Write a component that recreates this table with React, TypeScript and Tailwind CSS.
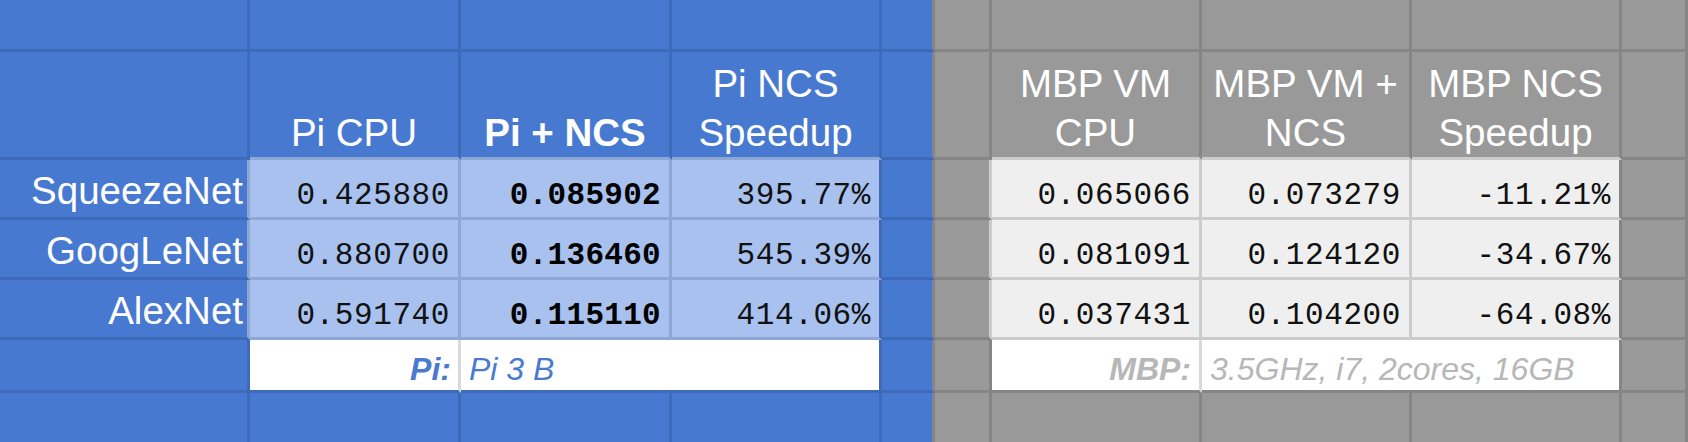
import React from "react";

const BLUE = "bg-[#4879d0]";
const LBLUE = "bg-[#a8c1ee]";
const GRAY = "bg-[#999999]";
const LGRAY = "bg-[#efefef]";
const WHITE = "bg-white";

type CellProps = {
  bg: string;
  r: string;
  b: string;
  className?: string;
  children?: React.ReactNode;
};

function Cell({ bg, r, b, className = "", children }: CellProps) {
  return (
    <div className={`border-r-[3px] border-b-[3px] overflow-visible ${bg} ${r} ${b} ${className}`}>
      {children}
    </div>
  );
}

const R_BL = "border-r-[#3e6bb9]";
const B_BL = "border-b-[#3e6bb9]";
const R_LB = "border-r-[#8fa7d5]";
const B_LB = "border-b-[#8fa7d5]";
const R_GL = "border-r-[#858585]";
const B_GL = "border-b-[#858585]";
const R_LG = "border-r-[#cccccc]";
const B_LG = "border-b-[#cccccc]";
const R_WS = "border-r-[#d9d9d9]";

const HEAD = "flex items-end justify-center text-center text-white text-[38.5px] leading-[49px]";
const LABEL = "flex items-end justify-end pr-[4px] pb-[2px] text-white text-[38.5px] leading-[49px]";
const NUM = "flex items-end justify-end pr-[8px] pb-[1px] font-['Liberation_Mono','Courier_New',monospace] text-[31px] tracking-[0.6px] leading-[40px] text-[#111111]";
const NUMB = "flex items-end justify-end pr-[8px] pb-[1px] font-['Liberation_Mono','Courier_New',monospace] font-bold text-[31px] tracking-[0.3px] leading-[40px] text-black";

const rows = [
  { name: "SqueezeNet", a: "0.425880", b: "0.085902", c: "395.77%", d: "0.065066", e: "0.073279", f: "-11.21%" },
  { name: "GoogLeNet", a: "0.880700", b: "0.136460", c: "545.39%", d: "0.081091", e: "0.124120", f: "-34.67%" },
  { name: "AlexNet", a: "0.591740", b: "0.115110", c: "414.06%", d: "0.037431", e: "0.104200", f: "-64.08%" },
];

function BlankRow() {
  return (
    <>
      <Cell bg={BLUE} r={R_BL} b={B_BL} />
      <Cell bg={BLUE} r={R_BL} b={B_BL} />
      <Cell bg={BLUE} r={R_BL} b={B_BL} />
      <Cell bg={BLUE} r={R_BL} b={B_BL} />
      <Cell bg={BLUE} r={R_GL} b={B_BL} />
      <Cell bg={GRAY} r={R_GL} b={B_GL} />
      <Cell bg={GRAY} r={R_GL} b={B_GL} />
      <Cell bg={GRAY} r={R_GL} b={B_GL} />
      <Cell bg={GRAY} r={R_GL} b={B_GL} />
      <Cell bg={GRAY} r={R_GL} b={B_GL} />
    </>
  );
}

export default function App() {
  return (
    <div className="w-[1688px] h-[442px] overflow-hidden bg-[#999999] font-['Liberation_Sans',Arial,sans-serif]">
      <div className="grid grid-cols-[250px_211px_211px_210px_53px_57px_210px_210px_210px_66px] grid-rows-[52px_108px_60px_60px_60px_53px_52px]">
        <BlankRow />

        <Cell bg={BLUE} r={R_BL} b={B_BL} />
        <Cell bg={BLUE} r={R_BL} b={B_LB} className={HEAD}>
          <span>Pi CPU</span>
        </Cell>
        <Cell bg={BLUE} r={R_BL} b={B_LB} className={HEAD}>
          <span className="font-bold">Pi + NCS</span>
        </Cell>
        <Cell bg={BLUE} r={R_BL} b={B_LB} className={HEAD}>
          <span>
            Pi NCS
            <br />
            Speedup
          </span>
        </Cell>
        <Cell bg={BLUE} r={R_GL} b={B_BL} />
        <Cell bg={GRAY} r={R_GL} b={B_GL} />
        <Cell bg={GRAY} r={R_GL} b={B_LG} className={HEAD}>
          <span>
            MBP VM
            <br />
            CPU
          </span>
        </Cell>
        <Cell bg={GRAY} r={R_GL} b={B_LG} className={HEAD}>
          <span>
            MBP VM +
            <br />
            NCS
          </span>
        </Cell>
        <Cell bg={GRAY} r={R_GL} b={B_LG} className={HEAD}>
          <span>
            MBP NCS
            <br />
            Speedup
          </span>
        </Cell>
        <Cell bg={GRAY} r={R_GL} b={B_GL} />

        {rows.map((row) => (
          <React.Fragment key={row.name}>
            <Cell bg={BLUE} r={R_LB} b={B_BL} className={LABEL}>
              <span>{row.name}</span>
            </Cell>
            <Cell bg={LBLUE} r={R_LB} b={B_LB} className={NUM}>
              <span>{row.a}</span>
            </Cell>
            <Cell bg={LBLUE} r={R_LB} b={B_LB} className={NUMB}>
              <span>{row.b}</span>
            </Cell>
            <Cell bg={LBLUE} r={R_BL} b={B_LB} className={NUM}>
              <span>{row.c}</span>
            </Cell>
            <Cell bg={BLUE} r={R_GL} b={B_BL} />
            <Cell bg={GRAY} r={R_LG} b={B_GL} />
            <Cell bg={LGRAY} r={R_LG} b={B_LG} className={NUM}>
              <span>{row.d}</span>
            </Cell>
            <Cell bg={LGRAY} r={R_LG} b={B_LG} className={NUM}>
              <span>{row.e}</span>
            </Cell>
            <Cell bg={LGRAY} r={R_GL} b={B_LG} className={NUM}>
              <span>{row.f}</span>
            </Cell>
            <Cell bg={GRAY} r={R_GL} b={B_GL} />
          </React.Fragment>
        ))}

        <Cell bg={BLUE} r={R_BL} b={B_BL} />
        <Cell
          bg={WHITE}
          r={R_WS}
          b={B_BL}
          className="flex items-end justify-end pr-[7px] pb-[1px] text-[32px] leading-[40px] italic font-bold text-[#4a7ad0]"
        >
          <span>Pi:</span>
        </Cell>
        <Cell
          bg={WHITE}
          r={R_BL}
          b={B_BL}
          className="col-span-2 flex items-end justify-start pl-[8px] pb-[1px] text-[32px] leading-[40px] italic text-[#4a7ad0]"
        >
          <span>Pi 3 B</span>
        </Cell>
        <Cell bg={BLUE} r={R_GL} b={B_BL} />
        <Cell bg={GRAY} r={R_GL} b={B_GL} />
        <Cell
          bg={WHITE}
          r={R_WS}
          b={B_GL}
          className="flex items-end justify-end pr-[8px] pb-[1px] text-[32px] leading-[40px] italic font-bold text-[#b7b7b7]"
        >
          <span>MBP:</span>
        </Cell>
        <Cell
          bg={WHITE}
          r={R_GL}
          b={B_GL}
          className="col-span-2 flex items-end justify-start pl-[8px] pb-[1px] text-[32px] leading-[40px] italic text-[#b7b7b7] whitespace-nowrap"
        >
          <span>3.5GHz, i7, 2cores, 16GB</span>
        </Cell>
        <Cell bg={GRAY} r={R_GL} b={B_GL} />

        <BlankRow />
      </div>
    </div>
  );
}
